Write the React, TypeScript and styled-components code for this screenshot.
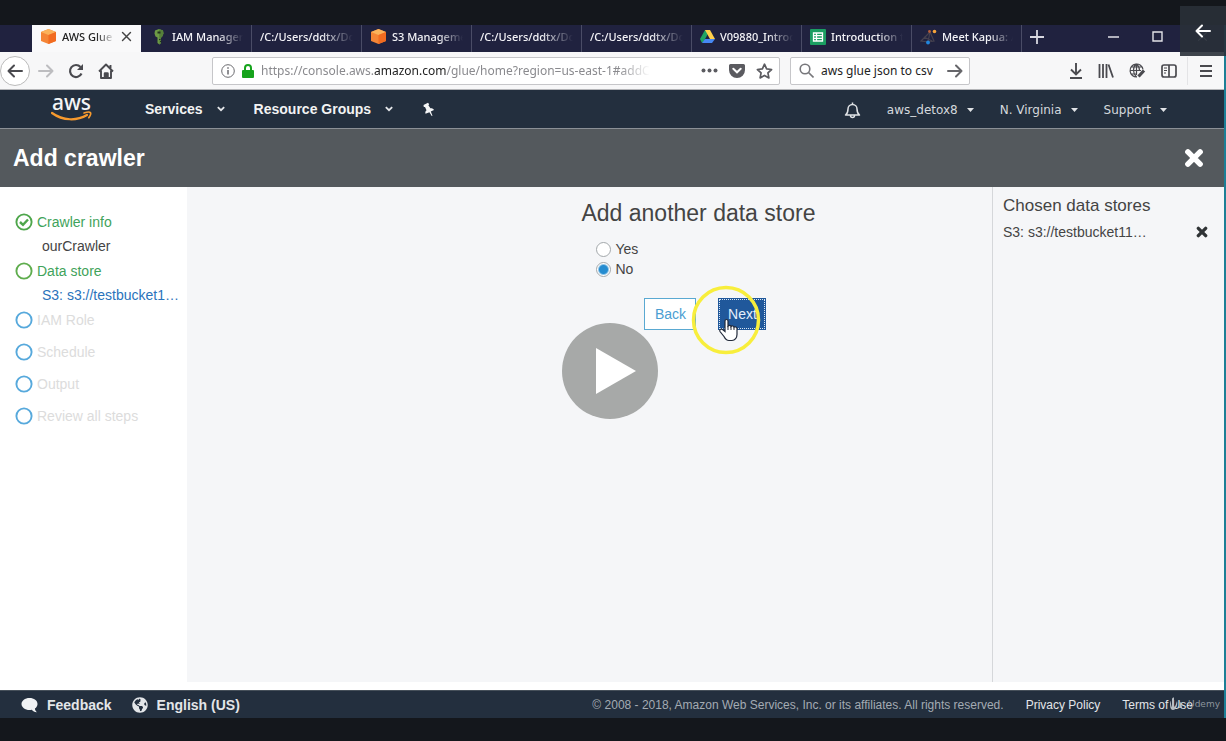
import React from "react";
import styled, { createGlobalStyle, css } from "styled-components";
import { FaGlobeAmericas } from "react-icons/fa";

const sans = '"Liberation Sans", Arial, sans-serif';
const chromeFont = '"Noto Sans", "Open Sans", sans-serif';
const navy = "#232f3e";

const GlobalStyle = createGlobalStyle`
  *, *::before, *::after { box-sizing: border-box; }
  body { margin: 0; background: #14171c; font-family: ${sans}; color: #444; }
  button { font: inherit; color: inherit; background: none; border: 0; padding: 0; cursor: pointer; }
  a { color: inherit; text-decoration: none; }
  svg { display: block; flex: none; }
  h1, h2, h3, p, ul, ol { margin: 0; padding: 0; font-weight: normal; list-style: none; }
`;

const Player = styled.div`
  position: relative;
  display: flex;
  flex-direction: column;
  min-height: 100vh;
  padding: 25px 0 23px;
  overflow: hidden;
`;

const Screen = styled.div`
  flex: 1;
  display: flex;
  flex-direction: column;
  background: #fff;
  border-right: 2px solid #1d7f96;
`;

/* Browser tabs */
const TabStrip = styled.div`
  display: flex;
  height: 27px;
  padding-left: 32px;
  background: #20223f;
  color: #f4f4f8;
  font: 11px/16px ${chromeFont};
`;

const Tab = styled.div<{ $active?: boolean }>`
  display: flex;
  align-items: center;
  gap: 5px;
  flex: 0 0 110px;
  width: 110px;
  padding: 0 8px;
  padding-bottom: 4px;
  border-right: 1px solid #4a4c66;
  ${(p) => p.$active && css`background: #f9f9fa; color: #222; border-right-color: #20223f;`}
`;

const TabTitle = styled.span`
  flex: 1;
  min-width: 0;
  white-space: nowrap;
  font-weight: 500;
  mask-image: linear-gradient(to right, #000 65%, transparent);
`;

const NewTab = styled.button`
  display: grid;
  place-items: center;
  width: 30px;
  padding-bottom: 4px;
`;

const WindowControls = styled.div`
  display: flex;
  align-items: center;
  gap: 33px;
  margin-left: auto;
  padding: 0 15px 4px 0;
`;

/* Browser toolbar */
const Toolbar = styled.div`
  display: flex;
  align-items: center;
  height: 38px;
  background: #f7f7f8;
  border-bottom: 1px solid #b4b5b8;
  color: #4a4a4f;
  font: 12px/18px ${chromeFont};
`;

const NavButtons = styled.div`
  display: flex;
  align-items: center;
  gap: 14px;
  width: 212px;
`;

const BackCircle = styled.button`
  display: grid;
  place-items: center;
  width: 30px;
  height: 30px;
  margin-right: -6px;
  border: 1px solid #bbb;
  border-radius: 50%;
  background: #fff;
`;

const Field = styled.div<{ $grow?: boolean }>`
  display: flex;
  align-items: center;
  min-width: 0;
  height: 28px;
  padding: 0 6px 0 8px;
  gap: 7px;
  background: #fff;
  border: 1px solid #c6c6c9;
  border-radius: 2px;
  ${(p) => (p.$grow ? css`flex: 1;` : css`flex: none; width: 180px; margin-left: 10px;`)}
`;

const Url = styled.div`
  flex: 1;
  min-width: 0;
  white-space: nowrap;
  color: #8a8a8e;
  b { color: #222; font-weight: 400; }
  span { display: inline-block; mask-image: linear-gradient(to right, #000 92%, transparent); }
`;

const SearchInput = styled.input`
  flex: 1;
  min-width: 0;
  border: 0;
  padding: 0;
  background: none;
  color: #222;
  font: 12px/18px ${chromeFont};
  outline: none;
`;

const FieldActions = styled.div`
  display: flex;
  align-items: center;
  gap: 11px;
`;

const ToolbarActions = styled.div`
  display: flex;
  align-items: center;
  justify-content: flex-end;
  gap: 15px;
  width: 254px;
  padding-right: 12px;
`;

const Divider = styled.span`
  width: 1px;
  height: 28px;
  margin: 0 -3px 0 -5px;
  background: #e4e4e6;
`;

/* AWS navigation */
const AwsNav = styled.nav`
  display: flex;
  align-items: center;
  height: 39px;
  padding: 0 57px 0 51px;
  background: ${navy};
  border-bottom: 1px solid #8b9096;
  color: #f2f3f3;
`;

const Logo = styled.a`
  display: block;
  width: 42px;
  margin-right: 52px;
`;

const MainMenu = styled.button`
  display: flex;
  align-items: center;
  gap: 14px;
  margin-right: 29px;
  font: bold 14px/18px ${sans};
`;

const AccountMenus = styled.div`
  display: flex;
  align-items: center;
  gap: 26px;
  margin-left: auto;
  padding-top: 2px;
  color: #d5d9dd;
  font: 12px/18px "DejaVu Sans", sans-serif;
`;

const AccountMenu = styled.button`
  display: flex;
  align-items: center;
  gap: 9px;
`;

/* Page */
const PageHeader = styled.header`
  display: flex;
  align-items: center;
  justify-content: space-between;
  height: 58px;
  padding: 0 20px 0 13px;
  background: #54595d;
  color: #fff;
  h1 { font: bold 23px/28px ${sans}; }
`;

const Body = styled.div`
  flex: 1;
  display: flex;
  padding-bottom: 8px;
  font-size: 14px;
  line-height: 18px;
`;

const Steps = styled.ol`
  flex: none;
  width: 187px;
  padding: 26px 0 0 15px;
`;

const Step = styled.li<{ $state: "done" | "todo" }>`
  height: ${(p) => (p.$state === "done" ? 49 : 32)}px;
  color: ${(p) => (p.$state === "done" ? "#3fa35b" : "#dcdcdc")};
`;

const StepLabel = styled.div`
  display: flex;
  align-items: center;
  gap: 4px;
`;

const StepDetail = styled.a<{ $link?: boolean }>`
  display: block;
  padding: 6px 0 0 27px;
  white-space: nowrap;
  color: ${(p) => (p.$link ? "#2a73bb" : "#444")};
`;

const Main = styled.main`
  flex: 1;
  padding-top: 12px;
  background: #f5f6f8;
`;

const Form = styled.form`
  margin-left: 49%;
  h2 { font-size: 23px; line-height: 28px; white-space: nowrap; }
`;

const Options = styled.fieldset`
  margin: 12px 0 0 15px;
  padding: 0;
  border: 0;
`;

const Option = styled.label`
  display: flex;
  align-items: center;
  gap: 4px;
  height: 20px;
`;

const Radio = styled.input`
  appearance: none;
  width: 15px;
  height: 15px;
  margin: 0;
  border: 1px solid #a3a8ab;
  border-radius: 50%;
  background: #fff;
  &:checked { background: radial-gradient(circle, #258cd0 4px, #fff 6px); }
`;

const Actions = styled.div`
  display: flex;
  gap: 22px;
  margin: 19px 0 0 63px;
`;

const FormButton = styled.button<{ $primary?: boolean }>`
  height: 32px;
  width: ${(p) => (p.$primary ? 48 : 52)}px;
  border: 1px solid #5aa9d2;
  background: #fff;
  color: #4a9ed2;
  ${(p) => p.$primary && css`
    border-color: #20589b;
    background: #20589b;
    color: #e4eefa;
    outline: 1px dotted #d8e6f4;
    outline-offset: -2px;
  `}
`;

const NextWrap = styled.div`
  position: relative;
`;

const Pointer = styled.svg`
  position: absolute;
  left: -27px;
  top: -14px;
  pointer-events: none;
`;

const Chosen = styled.aside`
  flex: 0 0 232px;
  padding: 8px 16px 0 10px;
  background: #f5f6f8;
  border-left: 1px solid #d5d7da;
  h3 { font-size: 17px; line-height: 22px; }
`;

const ChosenRow = styled.div`
  display: flex;
  align-items: center;
  justify-content: space-between;
  margin-top: 6px;
`;

const Footer = styled.footer`
  display: flex;
  align-items: center;
  height: 28px;
  padding: 0 31px 0 21px;
  background: ${navy};
  border-top: 1px solid #46505a;
  color: #e3e6e9;
  font: 12px/16px ${sans};
  white-space: nowrap;
`;

const FooterButton = styled.button`
  display: flex;
  align-items: center;
  gap: 9px;
  margin-right: 20px;
  font: bold 14px/18px ${sans};
`;

const Legal = styled.div`
  display: flex;
  gap: 22px;
  margin-left: auto;
  p { color: #a3abb3; }
`;

/* Video player overlays */
const PlayButton = styled.button`
  position: absolute;
  left: calc(50% - 51px);
  top: calc(50% - 48px);
  width: 96px;
  height: 96px;
  border-radius: 50%;
  background: #a7a9a8;
`;

const ExitButton = styled.button`
  position: absolute;
  top: 6px;
  right: 0;
  display: grid;
  place-items: center;
  width: 46px;
  height: 50px;
  background: rgba(41, 48, 57, 0.9);
`;

const Watermark = styled.div`
  position: absolute;
  right: 6px;
  bottom: 29px;
  display: flex;
  align-items: center;
  gap: 3px;
  color: #8d959d;
  font: 9px/16px "DejaVu Sans", sans-serif;
`;

const Cube = () => (
  <svg width="17" height="17" viewBox="0 0 17 17">
    <path d="M8.500 1 16 4v9l-7.500 3L1 13V4z" fill="#f58536" />
    <path d="M8.500 1 16 4 8.500 7 1 4z" fill="#fbb25b" />
    <path d="M8.500 7 16 4v9l-7.500 3z" fill="#f26b20" />
  </svg>
);

const KeyIcon = () => (
  <svg width="17" height="17" viewBox="0 0 17 17">
    <path d="M5 2.500 9 1l4 1.500.5 3L12 9l-1 .5V15l-1.500 1.500L7.500 15V9.500L5.500 8.500l-1-3z" fill="#6d9a45" />
    <path d="M9 1l4 1.500.5 3L12 9l-1 .5V15l-1.500 1.500z" fill="#56803a" />
    <path d="M7.500 3.500h3v2h-3zM9 11h1.500v1H9zM10 13h1.500v1H10z" fill="#22331f" />
  </svg>
);

const DriveIcon = () => (
  <svg width="15" height="15" viewBox="0 0 15 15">
    <path d="M5 1h5L4 12 2 14 0 10z" fill="#1fa463" />
    <path d="M5 1h5l5 9h-5z" fill="#ffd04b" />
    <path d="M5 10h10l-3 4H2z" fill="#4688f4" />
  </svg>
);

const SheetIcon = () => (
  <svg width="16" height="16" viewBox="0 0 16 16">
    <rect width="16" height="16" rx="1" fill="#1b9e62" />
    <path d="M3.500 4h9v8h-9zM3.500 6.700h9M3.500 9.400h9M6.500 4v8" fill="none" stroke="#fff" strokeWidth="1.300" />
  </svg>
);

const KapuaIcon = () => (
  <svg width="17" height="16" viewBox="0 0 17 16">
    <path d="M1 12 10 3l4 9-6 1zM4 8l8 4M10 3 8 13" fill="none" stroke="#45414f" strokeWidth="1.200" />
    <circle cx="14.500" cy="2.500" r="1.800" fill="#f5a33b" />
    <circle cx="9.500" cy="2.500" r="1.400" fill="#b85d39" />
    <circle cx="8" cy="13.500" r="1.900" fill="#2086df" />
  </svg>
);

const Arrow = ({ left, color = "#4a4a4f" }: { left?: boolean; color?: string }) => (
  <svg width="16" height="16" viewBox="0 0 16 16" fill="none" stroke={color} strokeWidth="2" strokeLinecap="round" strokeLinejoin="round">
    <path d={left ? "M15 8H1.500M7 2.500 1.500 8 7 13.500" : "M1 8h13.500M9 2.500l5.500 5.500L9 13.500"} />
  </svg>
);

const Cross = ({ size, color, width }: { size: number; color: string; width: number }) => (
  <svg width={size} height={size} viewBox="0 0 18 18" stroke={color} strokeWidth={width} strokeLinecap="round">
    <path d="m3.500 3.500 11 11m0-11-11 11" />
  </svg>
);

const Chevron = () => (
  <svg width="8" height="6" viewBox="0 0 8 6" fill="none" stroke="#e5e7ea" strokeWidth="1.800">
    <path d="m.8 1.200 3.200 3 3.200-3" />
  </svg>
);

const Caret = () => (
  <svg width="7" height="4" viewBox="0 0 7 4"><path d="M0 0h7L3.500 4z" fill="#e0e3e6" /></svg>
);

const PinIcon = () => (
  <svg width="13" height="15" viewBox="0 0 13 15">
    <path d="M1.500 3 6 .8l1.200 1.500-.8 1 2 3c1.600-.2 3 .4 3.600 1.700L8.800 9.600l1.700 4.100-.8.400-2.300-3.900-3.900 1.600c-.5-1.500 0-2.700 1-3.600L3 4.900l-1.200.100z" fill="#f5f6f7" />
  </svg>
);

const CommentIcon = () => (
  <svg width="17" height="16" viewBox="0 0 17 16">
    <path d="M8.500 1C13 1 16.500 3.500 16.500 7c0 1.900-1 3.500-2.600 4.600.1 1.400.8 2.500 1.900 3.600-2 .1-3.800-.8-5-2.400-.7.100-1.500.2-2.300.2C4 13 .500 10.300.500 7S4 1 8.500 1z" fill="#f0f2f4" />
  </svg>
);

const Ring = ({ color, checked }: { color: string; checked?: boolean }) => (
  <svg width="18" height="18" viewBox="0 0 18 18" fill="none" stroke={color}>
    <circle cx="9" cy="9" r="7.600" strokeWidth="1.900" />
    {checked && <path d="m5 9 3 2.800 5-5.300" strokeWidth="2.400" />}
  </svg>
);

const AwsLogo = () => (
  <svg width="42" height="34" viewBox="0 0 42 34">
    <text x="20.500" y="18" textAnchor="middle" fontFamily="Noto Sans, sans-serif" fontSize="21" fontWeight="500" fill="#f4f5f6">aws</text>
    <path d="M1 21c11 8 25 8 35 2" fill="none" stroke="#f79a2e" strokeWidth="2.200" strokeLinecap="round" />
    <path d="M33 21c3-1 6-1 6.500-.3.500.8-.5 3.300-1.700 5" fill="none" stroke="#f79a2e" strokeWidth="1.700" strokeLinecap="round" />
  </svg>
);

const InfoIcon = () => (
  <svg width="14" height="14" viewBox="0 0 14 14" fill="none" stroke="#6b6b70">
    <circle cx="7" cy="7" r="6.300" /><path d="M7 6v4.500M7 3.300v1.500" strokeWidth="1.500" />
  </svg>
);

const LockIcon = () => (
  <svg width="12" height="14" viewBox="0 0 12 14">
    <path d="M3 7V4a3 3 0 0 1 6 0v3" fill="none" stroke="#16a31c" strokeWidth="2" />
    <rect y="6" width="12" height="8" rx="1" fill="#16a31c" />
  </svg>
);

const tabs: { title: string; icon?: React.ReactNode; active?: boolean }[] = [
  { title: "AWS Glue", icon: <Cube />, active: true },
  { title: "IAM Manager", icon: <KeyIcon /> },
  { title: "/C:/Users/ddtx/Do" },
  { title: "S3 Manageme", icon: <Cube /> },
  { title: "/C:/Users/ddtx/Do" },
  { title: "/C:/Users/ddtx/Do" },
  { title: "V09880_Introd", icon: <DriveIcon /> },
  { title: "Introduction t", icon: <SheetIcon /> },
  { title: "Meet Kapua: /", icon: <KapuaIcon /> },
];

const pending = ["IAM Role", "Schedule", "Output", "Review all steps"];

export default function App() {
  return (
    <Player>
      <GlobalStyle />
      <Screen>
        <TabStrip>
          {tabs.map((t, i) => (
            <Tab key={i} $active={t.active}>
              {t.icon}
              <TabTitle>{t.title}</TabTitle>
              {t.active && <Cross size={13} color="#444" width={2} />}
            </Tab>
          ))}
          <NewTab aria-label="New tab">
            <svg width="14" height="14" stroke="#d8d8e0" strokeWidth="1.800"><path d="M7 0v14M0 7h14" /></svg>
          </NewTab>
          <WindowControls>
            <button aria-label="Minimize"><svg width="11" height="11" stroke="#e2e2e8" strokeWidth="1.500"><path d="M0 6h11" /></svg></button>
            <button aria-label="Maximize"><svg width="11" height="11" fill="none" stroke="#e2e2e8" strokeWidth="1.400"><path d="M1 1h9v9H1z" /></svg></button>
            <button aria-label="Close window"><Cross size={13} color="#b0b3bb" width={1.5} /></button>
          </WindowControls>
        </TabStrip>

        <Toolbar>
          <NavButtons>
            <BackCircle aria-label="Back"><Arrow left /></BackCircle>
            <button aria-label="Forward"><Arrow color="#bdbdc0" /></button>
            <button aria-label="Reload">
              <svg width="16" height="16" viewBox="0 0 16 16" fill="none" stroke="#4a4a4f" strokeWidth="2.200">
                <path d="M13.500 10.500A6 6 0 1 1 12.500 4" /><path d="M15 1v6H9z" fill="#4a4a4f" stroke="none" />
              </svg>
            </button>
            <button aria-label="Home">
              <svg width="16" height="16" viewBox="0 0 16 16" fill="none" stroke="#4a4a4f" strokeWidth="1.900" strokeLinejoin="round">
                <path d="M1 8.500 8 1.500l7 7M3 7.500V15h10V7.500M12.500 2v4" /><path d="M7 15v-4.500h2.500V15" strokeWidth="2.500" />
              </svg>
            </button>
          </NavButtons>
          <Field $grow>
            <InfoIcon />
            <LockIcon />
            <Url><span>https://console.aws.<b>amazon.com</b>/glue/home?region=us-east-1#addC</span></Url>
            <FieldActions>
              <svg width="17" height="5" fill="#5b5b60"><circle cx="2.500" cy="2.500" r="2" /><circle cx="8.500" cy="2.500" r="2" /><circle cx="14.500" cy="2.500" r="2" /></svg>
              <svg width="16" height="14" viewBox="0 0 16 14">
                <path d="M1.500 0h13A1.500 1.500 0 0 1 16 1.500V6a8 8 0 0 1-16 0V1.500A1.500 1.500 0 0 1 1.500 0z" fill="#5b5b60" />
                <path d="m4.300 4.800 3.700 3.500 3.700-3.500" fill="none" stroke="#fff" strokeWidth="2" strokeLinecap="round" />
              </svg>
              <svg width="17" height="16" viewBox="0 0 17 16" fill="none" stroke="#5b5b60" strokeWidth="1.700" strokeLinejoin="round">
                <path d="m8.500 1.200 2.100 4.700 5 .6-3.700 3.400 1 5-4.400-2.500-4.400 2.500 1-5L1.400 6.500l5-.6z" />
              </svg>
            </FieldActions>
          </Field>
          <Field>
            <svg width="15" height="15" viewBox="0 0 15 15" fill="none" stroke="#77777b" strokeWidth="1.600"><circle cx="6" cy="6" r="4.800" /><path d="m9.500 9.500 5 5" /></svg>
            <SearchInput aria-label="Search" defaultValue="aws glue json to csv" />
            <button aria-label="Go"><Arrow color="#66666a" /></button>
          </Field>
          <ToolbarActions>
            <svg width="14" height="16" viewBox="0 0 14 16" fill="none" stroke="#4a4a4f" strokeWidth="1.900"><path d="M7 0v11M2 6.500l5 5 5-5M1 15h12" /></svg>
            <svg width="16" height="14" viewBox="0 0 16 14" fill="none" stroke="#4a4a4f" strokeWidth="1.800"><path d="M1.500 0v14M5 0v14M8.500 0v14M10.500.500 15 13.500" /></svg>
            <svg width="17" height="16" viewBox="0 0 17 16" fill="none" stroke="#4a4a4f" strokeWidth="1.200">
              <path d="M14 6.500A6.500 6.500 0 1 0 8 14M7.500 1c-4 3-4 9 0 13M7.500 1c2.500 2 3 4 3 6.500M1 7.500h11M2 4h11M2 11h6M7.500 1v11" />
              <path d="m9.500 13.500 5.500-6" strokeWidth="3.200" />
            </svg>
            <svg width="16" height="14" viewBox="0 0 16 14" fill="none" stroke="#4a4a4f" strokeWidth="1.700">
              <rect x="1" y="1" width="14" height="12" rx="2" /><path d="M8 1v12" /><path d="M3 4h3M3 6.500h3M3 9h2" strokeWidth="1" />
            </svg>
            <Divider />
            <svg width="12" height="12" stroke="#4a4a4f" strokeWidth="2"><path d="M0 1h12M0 6h12M0 11h12" /></svg>
          </ToolbarActions>
        </Toolbar>

        <AwsNav>
          <Logo href="#" aria-label="AWS home"><AwsLogo /></Logo>
          <MainMenu>Services <Chevron /></MainMenu>
          <MainMenu>Resource Groups <Chevron /></MainMenu>
          <button aria-label="Pin"><PinIcon /></button>
          <AccountMenus>
            <button aria-label="Notifications">
              <svg width="17" height="17" viewBox="0 0 17 17" fill="none" stroke="#e0e3e6" strokeWidth="1.500" strokeLinejoin="round">
                <path d="M1.500 13c2-1.500 2.500-3.500 2.500-6a4.500 4.500 0 0 1 9 0c0 2.500.500 4.500 2.500 6zM8.500 2.500V.5M6.500 13.500a2 2 0 0 0 4 0" />
              </svg>
            </button>
            <AccountMenu>aws_detox8 <Caret /></AccountMenu>
            <AccountMenu>N. Virginia <Caret /></AccountMenu>
            <AccountMenu>Support <Caret /></AccountMenu>
          </AccountMenus>
        </AwsNav>

        <PageHeader>
          <h1>Add crawler</h1>
          <button aria-label="Close"><Cross size={20} color="#fff" width={5} /></button>
        </PageHeader>

        <Body>
          <Steps>
            <Step $state="done">
              <StepLabel><Ring color="#4ea64b" checked />Crawler info</StepLabel>
              <StepDetail>ourCrawler</StepDetail>
            </Step>
            <Step $state="done">
              <StepLabel><Ring color="#5fad4e" />Data store</StepLabel>
              <StepDetail $link href="#">S3: s3://testbucket1…</StepDetail>
            </Step>
            {pending.map((label) => (
              <Step key={label} $state="todo">
                <StepLabel><Ring color="#57a9dc" />{label}</StepLabel>
              </Step>
            ))}
          </Steps>
          <Main>
            <Form onSubmit={(e) => e.preventDefault()}>
              <h2>Add another data store</h2>
              <Options aria-label="Add another data store">
                <Option><Radio type="radio" name="another" value="yes" />Yes</Option>
                <Option><Radio type="radio" name="another" value="no" defaultChecked />No</Option>
              </Options>
              <Actions>
                <FormButton type="button">Back</FormButton>
                <NextWrap>
                  <FormButton $primary>Next</FormButton>
                  <Pointer width="70" height="72" viewBox="0 0 70 72">
                    <circle cx="35" cy="36" r="32.500" fill="none" stroke="#f8ee3c" strokeWidth="3.500" />
                    <path d="M34 37c0-2 3-2 3 0v5c1-1 3-1 3 .5 1-1 3-.5 3 .8 1-.8 3-.3 3 1.200v6c0 3-2 6-5 6h-3c-2 0-4-2-5-4l-4-5c-1-2 1-3 2.500-2l2.500 2z" fill="#fff" stroke="#222a3a" strokeWidth="1.200" />
                    <path d="M37 42v4m3-3.500V46m3-2.500V46" stroke="#222a3a" />
                  </Pointer>
                </NextWrap>
              </Actions>
            </Form>
          </Main>
          <Chosen>
            <h3>Chosen data stores</h3>
            <ChosenRow>
              <span>S3: s3://testbucket11…</span>
              <button aria-label="Remove"><Cross size={12} color="#2f3335" width={5} /></button>
            </ChosenRow>
          </Chosen>
        </Body>

        <Footer>
          <FooterButton><CommentIcon />Feedback</FooterButton>
          <FooterButton><FaGlobeAmericas size={16} />English (US)</FooterButton>
          <Legal>
            <p>© 2008 - 2018, Amazon Web Services, Inc. or its affiliates. All rights reserved.</p>
            <a href="#">Privacy Policy</a>
            <a href="#">Terms of Use</a>
          </Legal>
        </Footer>
      </Screen>

      <PlayButton aria-label="Play">
        <svg width="96" height="96"><path d="M34 25v46l40-23z" fill="#fff" /></svg>
      </PlayButton>
      <ExitButton aria-label="Go back"><Arrow left color="#fff" /></ExitButton>
      <Watermark>
        <svg width="16" height="14" viewBox="0 0 16 14" fill="#b6bcc2">
          <path d="M1 4c1 0 1 5 2 6V2c0-1 2-2 2-1v9c2-1 2-4 3-6 1 4-1 9-4 9S1 9 1 4zM10 4c2 1 3 4 3 7h-3c1-3 1-5 0-7z" />
        </svg>
        Udemy
      </Watermark>
    </Player>
  );
}
